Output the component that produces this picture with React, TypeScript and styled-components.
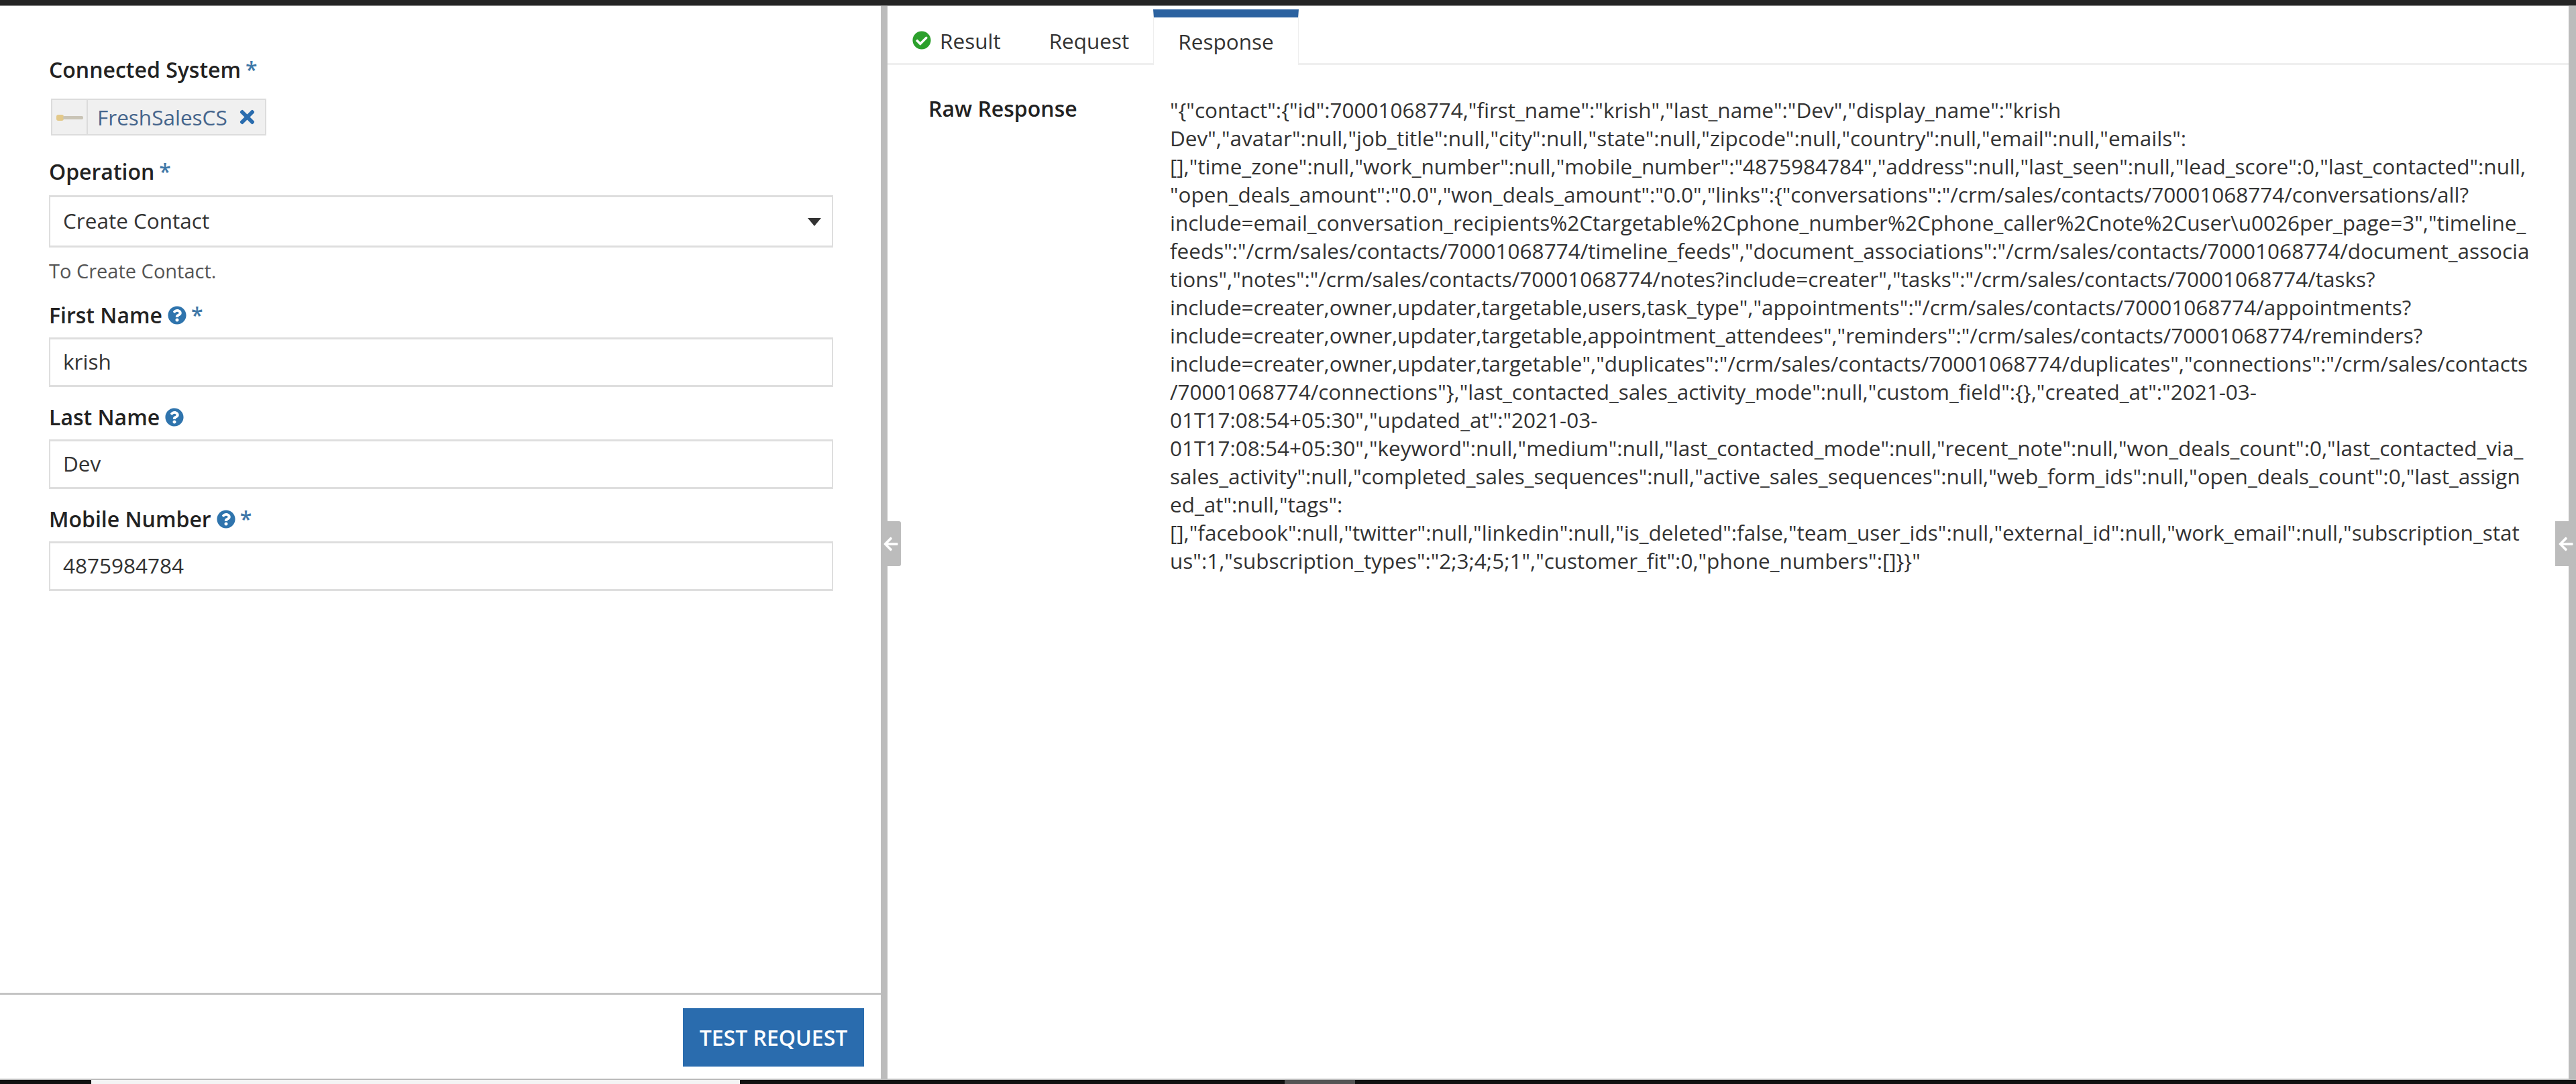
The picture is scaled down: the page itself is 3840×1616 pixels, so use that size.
import styled, { createGlobalStyle } from 'styled-components';
import { FaArrowLeft, FaCheckCircle, FaQuestionCircle, FaTimes } from 'react-icons/fa';

const RAW_RESPONSE = [
  '"{"contact":{"id":70001068774,"first_name":"krish","last_name":"Dev","display_name":"krish',
  'Dev","avatar":null,"job_title":null,"city":null,"state":null,"zipcode":null,"country":null,"email":null,"emails":',
  '[],"time_zone":null,"work_number":null,"mobile_number":"4875984784","address":null,"last_seen":null,"lead_score":0,"last_contacted":null,',
  '"open_deals_amount":"0.0","won_deals_amount":"0.0","links":{"conversations":"/crm/sales/contacts/70001068774/conversations/all?',
  'include=email_conversation_recipients%2Ctargetable%2Cphone_number%2Cphone_caller%2Cnote%2Cuser\\u0026per_page=3","timeline_',
  'feeds":"/crm/sales/contacts/70001068774/timeline_feeds","document_associations":"/crm/sales/contacts/70001068774/document_associa',
  'tions","notes":"/crm/sales/contacts/70001068774/notes?include=creater","tasks":"/crm/sales/contacts/70001068774/tasks?',
  'include=creater,owner,updater,targetable,users,task_type","appointments":"/crm/sales/contacts/70001068774/appointments?',
  'include=creater,owner,updater,targetable,appointment_attendees","reminders":"/crm/sales/contacts/70001068774/reminders?',
  'include=creater,owner,updater,targetable","duplicates":"/crm/sales/contacts/70001068774/duplicates","connections":"/crm/sales/contacts',
  '/70001068774/connections"},"last_contacted_sales_activity_mode":null,"custom_field":{},"created_at":"2021-03-',
  '01T17:08:54+05:30","updated_at":"2021-03-',
  '01T17:08:54+05:30","keyword":null,"medium":null,"last_contacted_mode":null,"recent_note":null,"won_deals_count":0,"last_contacted_via_',
  'sales_activity":null,"completed_sales_sequences":null,"active_sales_sequences":null,"web_form_ids":null,"open_deals_count":0,"last_assign',
  'ed_at":null,"tags":',
  '[],"facebook":null,"twitter":null,"linkedin":null,"is_deleted":false,"team_user_ids":null,"external_id":null,"work_email":null,"subscription_stat',
  'us":1,"subscription_types":"2;3;4;5;1","customer_fit":0,"phone_numbers":[]}}"',
];

export default function App() {
  return (
    <Page>
      <GlobalStyle />
      <TopBar />
      <Main>
        <LeftPane>
          <Form>
            <Field $gap={20} $after={9}>
              <Label>
                Connected System
                <Required>*</Required>
              </Label>
              <Tag>
                <TagLogo>
                  <svg width="40" height="12" viewBox="0 0 40 12">
                    <rect x="0" y="2" width="11" height="9" rx="3" fill="#e3c98a" />
                    <rect x="10" y="4" width="30" height="5" rx="2" fill="#c9c4b6" />
                  </svg>
                </TagLogo>
                <TagName>FreshSalesCS</TagName>
                <TagRemove>
                  <FaTimes />
                </TagRemove>
              </Tag>
            </Field>

            <Field $gap={12}>
              <Label>
                Operation
                <Required>*</Required>
              </Label>
              <Select>
                Create Contact
                <Caret />
              </Select>
              <Hint>To Create Contact.</Hint>
            </Field>

            <Field>
              <Label>
                First Name
                <HelpIcon />
                <Required>*</Required>
              </Label>
              <Input>krish</Input>
            </Field>

            <Field>
              <Label>
                Last Name
                <HelpIcon />
              </Label>
              <Input>Dev</Input>
            </Field>

            <Field>
              <Label>
                Mobile Number
                <HelpIcon />
                <Required>*</Required>
              </Label>
              <Input>4875984784</Input>
            </Field>
          </Form>
          <Footer>
            <TestButton>TEST REQUEST</TestButton>
          </Footer>
        </LeftPane>

        <Splitter>
          <Handle $side="left">
            <FaArrowLeft />
          </Handle>
        </Splitter>

        <RightPane>
          <Tabs>
            <Tab>
              <ResultIcon>
                <FaCheckCircle />
              </ResultIcon>
              Result
            </Tab>
            <Tab>Request</Tab>
            <Tab $active>Response</Tab>
          </Tabs>
          <ResponseRow>
            <ResponseLabel>Raw Response</ResponseLabel>
            <ResponseBody>
              {RAW_RESPONSE.map((line) => (
                <ResponseLine key={line}>{line}</ResponseLine>
              ))}
            </ResponseBody>
          </ResponseRow>
        </RightPane>

        <EdgeBar>
          <Handle $side="right">
            <FaArrowLeft />
          </Handle>
        </EdgeBar>
      </Main>
      <BottomBar>
        <BottomTab $width={967} $color="#f4f4f4" />
        <BottomTab $width={812} />
        <BottomTab $width={105} $color="#555" />
      </BottomBar>
    </Page>
  );
}

const GlobalStyle = createGlobalStyle`
  html, body {
    margin: 0;
    padding: 0;
    background: #fff;
  }

  * {
    box-sizing: border-box;
  }
`;

const Page = styled.div`
  display: flex;
  flex-direction: column;
  width: 3840px;
  height: 1616px;
  overflow: hidden;
  font-family: 'Open Sans', 'Liberation Sans', sans-serif;
  font-size: 31.5px;
  color: #333;
  background: #fff;
`;

const TopBar = styled.div`
  flex: 0 0 9px;
  background: #242424;
  border-bottom: 1px solid #999;
`;

const Main = styled.div`
  flex: 1;
  display: flex;
  min-height: 0;
`;

const LeftPane = styled.div`
  flex: 0 0 1313px;
  display: flex;
  flex-direction: column;
`;

const Form = styled.div`
  flex: 1;
  display: flex;
  flex-direction: column;
  gap: 24px;
  padding: 74px 71px 0 73px;
`;

const Field = styled.div<{ $gap?: number; $after?: number }>`
  display: flex;
  flex-direction: column;
  align-items: flex-start;
  gap: ${(p) => p.$gap ?? 10}px;
  margin-bottom: ${(p) => p.$after ?? 0}px;
`;

const Label = styled.div`
  display: flex;
  align-items: center;
  gap: 6px;
  height: 44px;
  padding-bottom: 3px;
  font-size: 32px;
  font-weight: 600;
  color: #222;
  white-space: pre;
`;

const Required = styled.span`
  align-self: flex-start;
  margin-top: -1px;
  margin-left: 1px;
  color: #3f78a8;
  font-size: 32px;
`;

const HelpIcon = styled(FaQuestionCircle)`
  width: 28px;
  height: 28px;
  margin-left: 2px;
  color: #2f74ad;
`;

const Tag = styled.div`
  display: flex;
  align-items: center;
  height: 55px;
  width: 321px;
  margin-left: 3px;
  background: #f0f0f0;
  border: 2px solid #dcdcdc;
`;

const TagLogo = styled.div`
  flex: 0 0 53px;
  align-self: stretch;
  display: flex;
  align-items: center;
  justify-content: center;
  border-right: 2px solid #dcdcdc;
`;

const TagName = styled.span`
  margin-left: 14px;
  color: #45658c;
`;

const TagRemove = styled.span`
  display: flex;
  margin-left: 14px;
  font-size: 31px;
  color: #2a6cae;
`;

const Input = styled.div`
  display: flex;
  align-items: center;
  width: 1169px;
  height: 74px;
  padding: 0 19px 3px;
  border: 2px solid #dedede;
  border-top-width: 3px;
  border-bottom-width: 3px;
  color: #333;
`;

const Select = styled(Input)`
  position: relative;
  height: 78px;
`;

const Caret = styled.span`
  position: absolute;
  right: 16px;
  top: 31px;
  border-left: 10px solid transparent;
  border-right: 10px solid transparent;
  border-top: 12px solid #333;
`;

const Hint = styled.div`
  margin-top: 4px;
  height: 40px;
  line-height: 38px;
  font-size: 29px;
  color: #555;
`;

const Footer = styled.div`
  display: flex;
  justify-content: flex-end;
  height: 128px;
  padding: 20px 25px 0 0;
  border-top: 3px solid #c4c4c4;
`;

const TestButton = styled.button`
  width: 270px;
  height: 87px;
  padding: 0;
  border: none;
  background: #2a6cae;
  color: #fff;
  font: 600 32px 'Open Sans', 'Liberation Sans', sans-serif;
`;

const Splitter = styled.div`
  position: relative;
  flex: 0 0 10px;
  background: #bcbcbc;
`;

const Handle = styled.div<{ $side: 'left' | 'right' }>`
  position: absolute;
  top: 768px;
  ${(p) => (p.$side === 'left' ? 'left: 0; width: 30px;' : 'right: 0; width: 31px;')}
  height: 67px;
  display: flex;
  align-items: center;
  justify-content: center;
  background: #bcbcbc;
  color: #fff;
  font-size: 24px;
  border-radius: 0 3px 3px 0;
`;

const RightPane = styled.div`
  flex: 1;
  display: flex;
  flex-direction: column;
  min-width: 0;
`;

const Tabs = styled.div`
  display: flex;
  height: 88px;
  padding: 5px 0 0 1px;
  border-bottom: 3px solid #efefef;
`;

const Tab = styled.div<{ $active?: boolean }>`
  display: flex;
  align-items: center;
  gap: 13px;
  height: ${(p) => (p.$active ? '83px' : '80px')};
  padding: 0 36px;
  color: #333;
  background: #fff;
  border-top: 12px solid ${(p) => (p.$active ? '#2b62a0' : 'transparent')};
  ${(p) => p.$active && 'border-left: 1px solid #eee; border-right: 1px solid #eee;'}
`;

const ResultIcon = styled.span`
  display: flex;
  font-size: 28px;
  color: #2ca02c;
`;

const ResponseRow = styled.div`
  display: flex;
  padding: 46px 0 0 61px;
`;

const ResponseLabel = styled.div`
  flex: 0 0 360px;
  line-height: 38px;
  font-size: 32px;
  font-weight: 600;
  color: #222;
`;

const ResponseBody = styled.div`
  line-height: 42px;
  color: #333;
`;

const ResponseLine = styled.div`
  white-space: nowrap;
`;

const EdgeBar = styled.div`
  position: relative;
  flex: 0 0 11px;
  background: #bcbcbc;
`;

const BottomBar = styled.div`
  flex: 0 0 8px;
  display: flex;
  padding-left: 136px;
  background: #111;
  border-top: 2px solid #bbb;
`;

const BottomTab = styled.div<{ $width: number; $color?: string }>`
  width: ${(p) => p.$width}px;
  background: ${(p) => p.$color ?? 'transparent'};
`;
